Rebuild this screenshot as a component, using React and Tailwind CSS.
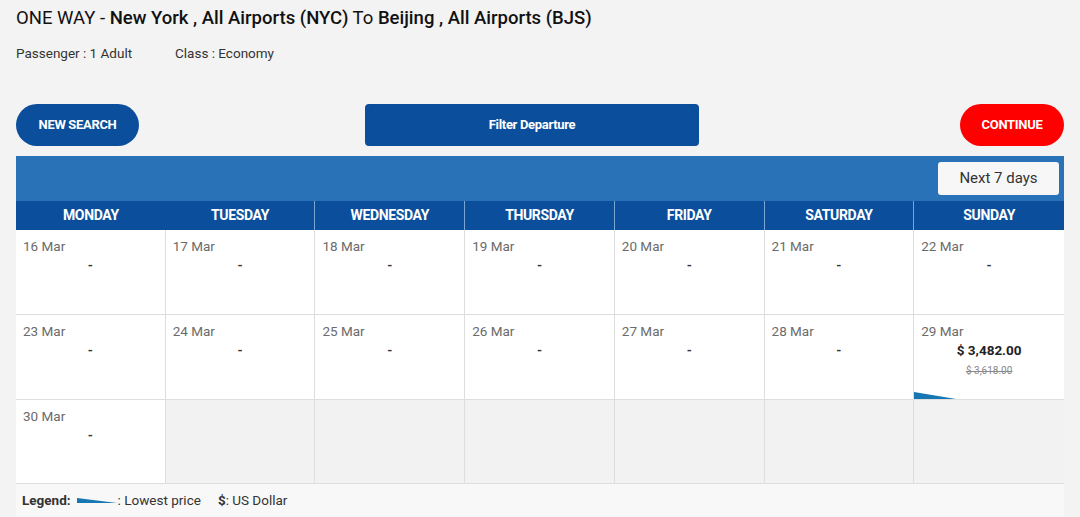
const days = ['MONDAY', 'TUESDAY', 'WEDNESDAY', 'THURSDAY', 'FRIDAY', 'SATURDAY', 'SUNDAY'];

const weeks = [
  [
    { date: '16 Mar' }, { date: '17 Mar' }, { date: '18 Mar' }, { date: '19 Mar' },
    { date: '20 Mar' }, { date: '21 Mar' }, { date: '22 Mar' },
  ],
  [
    { date: '23 Mar' }, { date: '24 Mar' }, { date: '25 Mar' }, { date: '26 Mar' },
    { date: '27 Mar' }, { date: '28 Mar' },
    { date: '29 Mar', price: '$ 3,482.00', old: '$ 3,618.00', lowest: true },
  ],
  [{ date: '30 Mar' }, null, null, null, null, null, null],
];

function Wedge({ className }) {
  return (
    <svg viewBox="0 0 42 7" className={className} preserveAspectRatio="none">
      <polygon points="0,0 42,7 0,7" fill="#1677b3" />
    </svg>
  );
}

function DayCell({ cell, last }) {
  if (!cell) {
    return <div className={`h-full bg-[#f2f2f2] ${last ? '' : 'border-r border-[#dedede]'}`} />;
  }
  return (
    <div className={`relative h-full bg-white px-[7px] pt-[8px] ${last ? '' : 'border-r border-[#dedede]'}`}>
      <div className="text-[13.5px] leading-4 text-[#6b6b6b]">{cell.date}</div>
      {cell.price ? (
        <div className="text-center">
          <div className="mt-[1px] text-[13.5px] font-bold leading-5 text-[#222]">{cell.price}</div>
          <div className="mt-[3px] text-[10px] leading-4 text-[#888] line-through">{cell.old}</div>
        </div>
      ) : (
        <div className="mt-[4px] text-center text-[13px] font-bold leading-4 text-[#333]">-</div>
      )}
      {cell.lowest && <Wedge className="absolute bottom-0 left-0 h-[7px] w-[42px]" />}
    </div>
  );
}

export default function App() {
  return (
    <div className="min-h-[517px] bg-[#f3f3f3] px-4 pt-[7px] font-['Roboto',sans-serif] text-[#222]">
      <h1 className="text-[18.5px] leading-[22px] text-[#111]">
        ONE WAY - <span className="font-medium">New York , All Airports (NYC)</span> To{' '}
        <span className="font-medium">Beijing , All Airports (BJS)</span>
      </h1>
      <div className="mt-[16px] flex text-[13.5px] leading-4 text-[#333]">
        <span className="w-[159px]">Passenger : 1 Adult</span>
        <span>Class : Economy</span>
      </div>

      <div className="mt-[43px] flex h-[42px] items-stretch">
        <button className="w-[123px] rounded-full bg-[#0b4f9c] text-[13px] font-bold tracking-tight text-white">
          NEW SEARCH
        </button>
        <button className="ml-[226px] w-[334px] rounded-[4px] bg-[#0b4f9c] text-[13px] font-bold tracking-tight text-white">
          Filter Departure
        </button>
        <button className="ml-auto w-[104px] rounded-full bg-[#ff0000] text-[13px] font-bold tracking-tight text-white">
          CONTINUE
        </button>
      </div>

      <div className="mt-[10px] flex h-[45px] items-center justify-end bg-[#2a72b7] pr-[5px]">
        <button className="h-[33px] w-[121px] rounded-[3px] bg-[#f7f7f7] text-[15px] text-[#333]">
          Next 7 days
        </button>
      </div>

      <div className="grid h-[29px] grid-cols-7 bg-[#0b4f9c]">
        {days.map((d, i) => (
          <div
            key={d}
            className={`flex items-center justify-center text-[14px] font-bold tracking-tight text-white ${
              i > 0 && i < 6 ? 'border-r border-[#7aa6d6]' : ''
            }`}
          >
            {d}
          </div>
        ))}
      </div>

      <div className="grid grid-cols-7 grid-rows-[85px_85px_84px]">
        {weeks.map((week, w) =>
          week.map((cell, i) => (
            <div key={`${w}-${i}`} className="border-b border-[#dedede]">
              <DayCell cell={cell} last={i === 6} />
            </div>
          ))
        )}
      </div>

      <div className="flex h-[32px] items-center bg-[#f8f8f8] px-[6px] text-[13.5px] text-[#333]">
        <span className="font-bold">Legend:</span>
        <Wedge className="ml-[6px] h-[5px] w-[40px]" />
        <span className="ml-[1px]">: Lowest price</span>
        <span className="ml-[17px] font-bold">$</span>
        <span>: US Dollar</span>
      </div>
    </div>
  );
}
